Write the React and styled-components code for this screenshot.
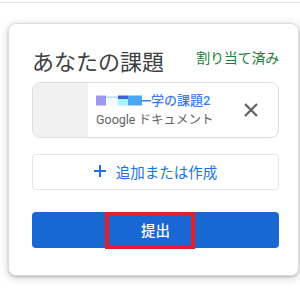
import React from "react";
import styled, { createGlobalStyle } from "styled-components";

const Global = createGlobalStyle`
  html, body { margin: 0; padding: 0; background: #fff; }
  body { font-family: Roboto, "Noto Sans CJK JP", sans-serif; }
`;

const Page = styled.div`
  width: 300px;
  height: 292px;
  overflow: hidden;
  padding-top: 2px;
  box-sizing: border-box;
`;

const TopRule = styled.div`
  height: 1px;
  background: #e0e0e0;
`;

const Card = styled.section`
  margin: 20px 1px 0 8px;
  border: 1px solid #dadce0;
  border-radius: 8px;
  box-shadow: 0 1px 2px 0 rgba(60, 64, 67, 0.3), 0 2px 6px 2px rgba(60, 64, 67, 0.15);
  padding: 25px 19px 27px 23px;
  display: flex;
  flex-direction: column;
`;

const Header = styled.div`
  display: flex;
  justify-content: space-between;
  align-items: flex-start;
`;

const Title = styled.h2`
  margin: 0;
  font-size: 22px;
  font-weight: 400;
  line-height: 28px;
  color: #3c4043;
`;

const Status = styled.span`
  margin-top: 1px;
  font-size: 14px;
  line-height: 17px;
  color: #188038;
  letter-spacing: -0.2px;
`;

const Attachment = styled.div`
  margin-top: 5px;
  height: 56px;
  border: 1px solid #dadce0;
  border-radius: 8px;
  overflow: hidden;
  display: flex;
  align-items: center;
  box-sizing: border-box;
`;

const Thumb = styled.div`
  width: 55px;
  align-self: stretch;
  background: #f1f1f1;
`;

const Info = styled.div`
  flex: 1;
  padding-left: 8px;
  display: flex;
  flex-direction: column;
  gap: 2px;
  min-width: 0;
`;

const FileName = styled.div`
  display: flex;
  align-items: center;
  font-size: 13px;
  line-height: 17px;
  color: #3f7ee8;
  font-weight: 500;
`;

const FileType = styled.div`
  font-size: 12.5px;
  line-height: 17px;
  color: #5f6368;
`;

const IconButton = styled.button`
  width: 40px;
  height: 40px;
  margin-right: 7px;
  border: none;
  background: transparent;
  display: flex;
  align-items: center;
  justify-content: center;
  padding: 0;
  color: #5f6368;
`;

const AddButton = styled.button`
  margin-top: 16px;
  height: 36px;
  border: 1px solid #e3e5e8;
  border-radius: 4px;
  background: #fff;
  display: flex;
  align-items: center;
  justify-content: center;
  gap: 10px;
  font-family: inherit;
  font-size: 14.5px;
  color: #1a73e8;
  padding: 0 0 2px 0;
`;

const SubmitWrap = styled.div`
  position: relative;
  margin-top: 22px;
`;

const SubmitButton = styled.button`
  width: 100%;
  height: 36px;
  border: none;
  border-radius: 4px;
  background: #1967d2;
  color: #fff;
  font-family: inherit;
  font-size: 14.5px;
  font-weight: 500;
  display: flex;
  align-items: center;
  justify-content: center;
  padding: 0 0 1px 0;
`;

const Highlight = styled.div`
  position: absolute;
  left: 73px;
  top: 0;
  width: 90px;
  height: 37px;
  border: 4px solid #e41e26;
  box-sizing: border-box;
  pointer-events: none;
`;

function Redacted() {
  return (
    <svg width="55" height="11" viewBox="0 0 55 11" style={{ flexShrink: 0 }}>
      <rect x="0" y="0.5" width="10" height="10" fill="#9f97f2" />
      <rect x="10" y="1.5" width="12" height="1.5" fill="#b7d7fb" />
      <rect x="10" y="3" width="12" height="7.5" fill="#f4fbff" />
      <rect x="22" y="0.5" width="10" height="3.5" fill="#3d62d8" />
      <rect x="22" y="4" width="10" height="6.5" fill="#a6f3ff" />
      <rect x="32" y="0.5" width="14" height="10" fill="#4aa5f2" />
      <rect x="46" y="5" width="9" height="1.5" fill="#3f7ee8" />
    </svg>
  );
}

export default function App() {
  return (
    <Page>
      <Global />
      <TopRule />
      <Card>
        <Header>
          <Title>あなたの課題</Title>
          <Status>割り当て済み</Status>
        </Header>
        <Attachment>
          <Thumb />
          <Info>
            <FileName>
              <Redacted />
              <span>学の課題2</span>
            </FileName>
            <FileType>Google ドキュメント</FileType>
          </Info>
          <IconButton aria-label="削除">
            <svg width="14" height="14" viewBox="0 0 14 14">
              <path d="M1 1L13 13M13 1L1 13" stroke="#5f6368" strokeWidth="2.2" />
            </svg>
          </IconButton>
        </Attachment>
        <AddButton>
          <svg width="12" height="12" viewBox="0 0 12 12">
            <path d="M6 0V12M0 6H12" stroke="#1a73e8" strokeWidth="2" />
          </svg>
          <span>追加または作成</span>
        </AddButton>
        <SubmitWrap>
          <SubmitButton>提出</SubmitButton>
          <Highlight />
        </SubmitWrap>
      </Card>
    </Page>
  );
}
